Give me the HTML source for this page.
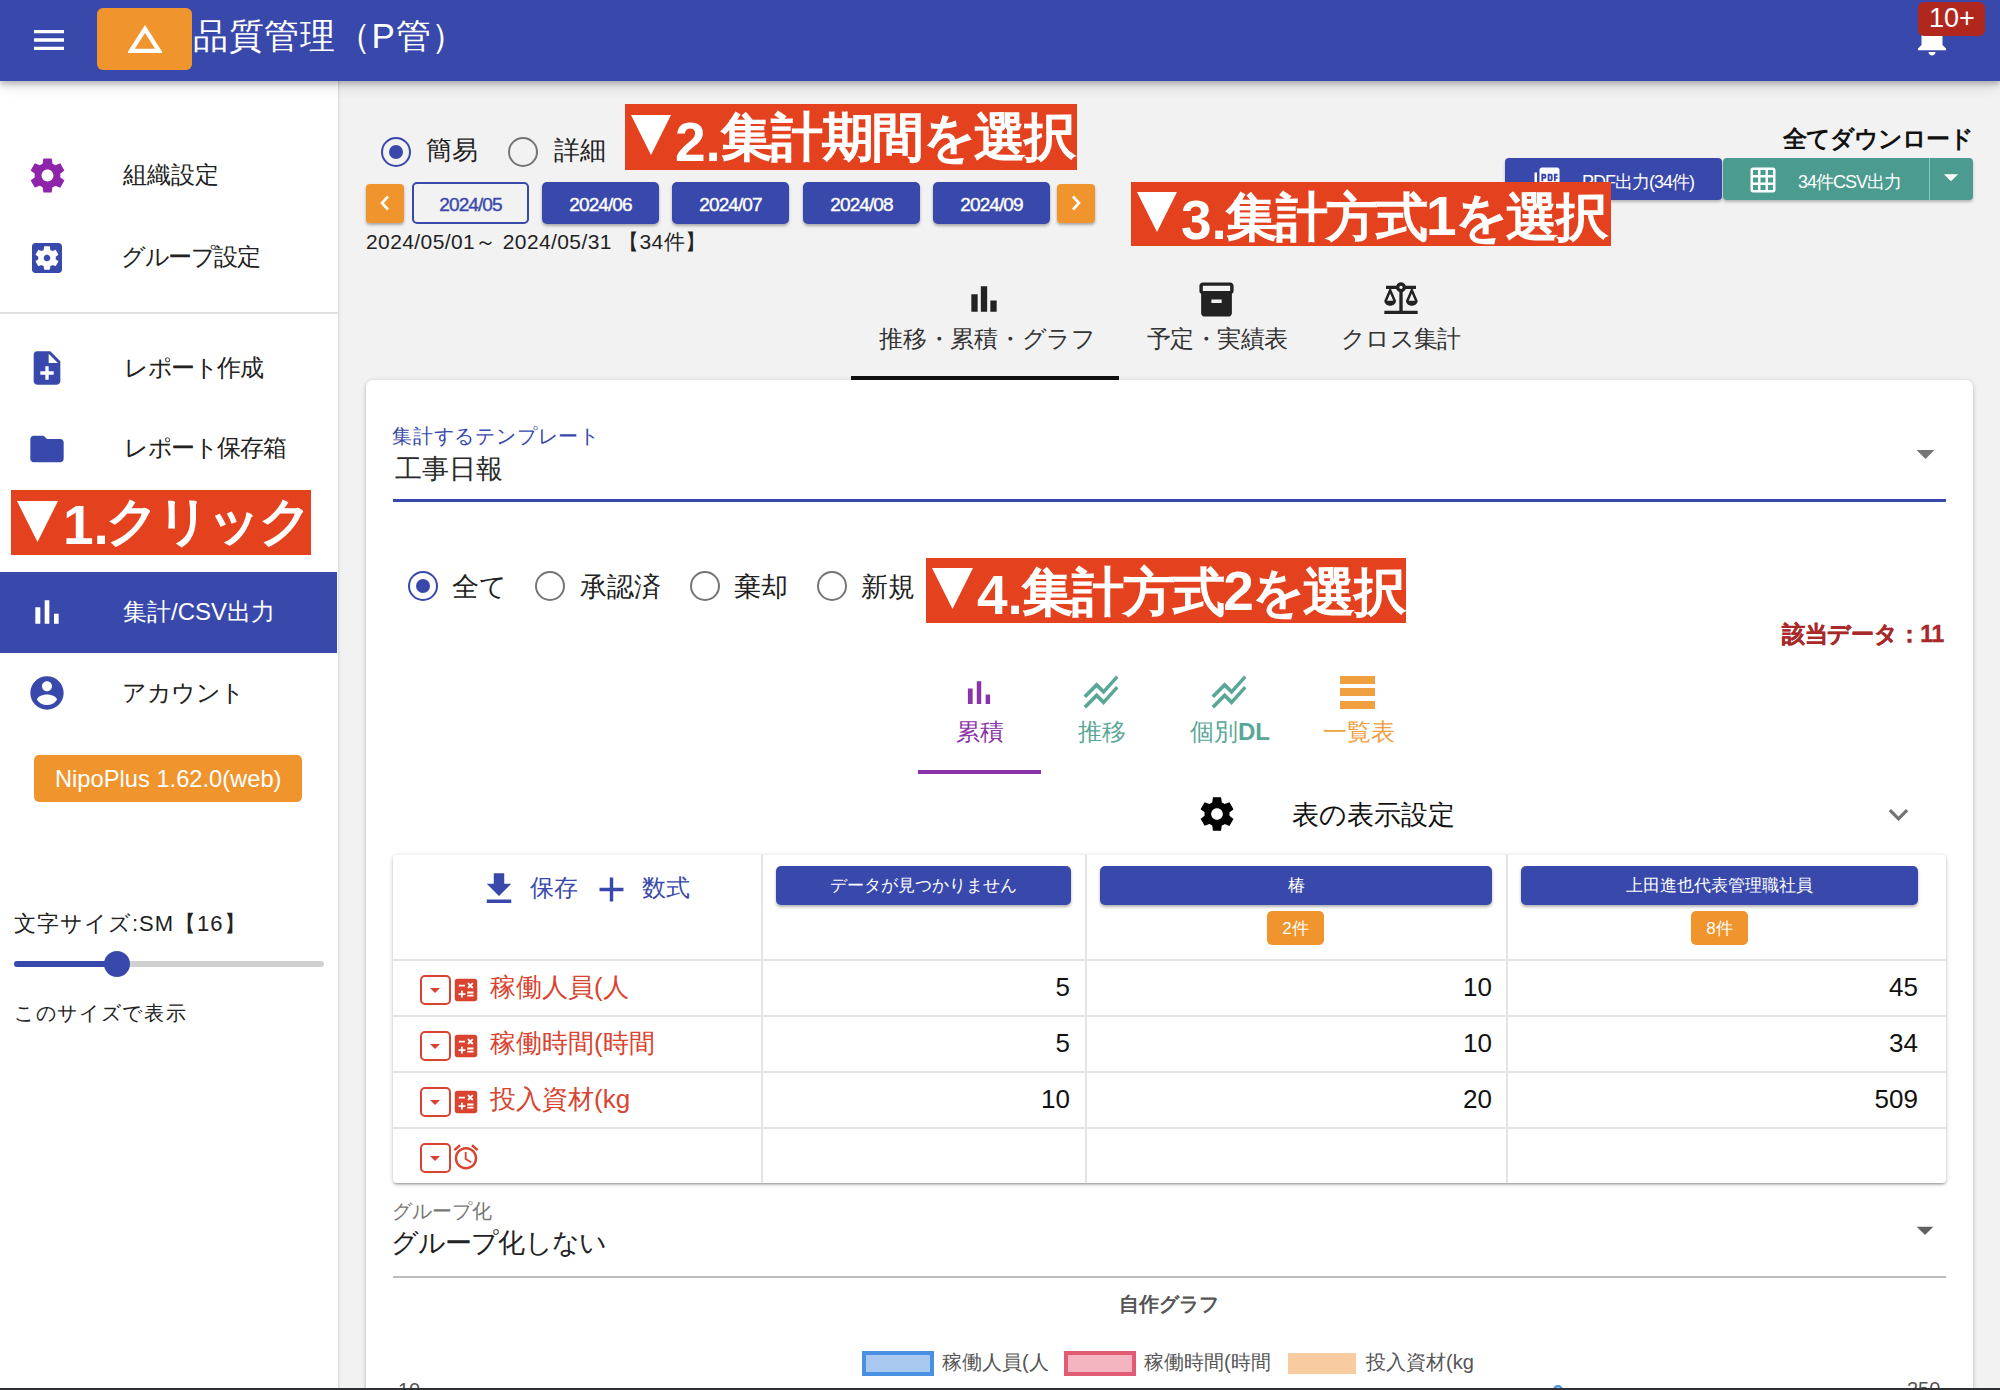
<!DOCTYPE html>
<html><head><meta charset="utf-8">
<style>
*{box-sizing:border-box;margin:0;padding:0}
html,body{width:2000px;height:1390px;overflow:hidden;background:#f2f2f2;font-family:"Liberation Sans",sans-serif;color:#222}
.a{position:absolute;white-space:nowrap;line-height:1}
svg{position:absolute;display:block}
#hdr{position:absolute;left:0;top:0;width:2000px;height:81px;background:#3949ab;box-shadow:0 3px 5px rgba(0,0,0,.2),0 6px 12px rgba(0,0,0,.12);z-index:5}
#side{position:absolute;left:0;top:81px;width:339px;height:1309px;background:#fff;border-right:1px solid #dcdcdc;box-shadow:1px 0 2px rgba(0,0,0,.05)}
.ann{position:absolute;background:#e53a1d;color:#fff;font-weight:bold;white-space:nowrap;line-height:1;z-index:8}
.annb{position:absolute;background:#e4411e;z-index:8}
.annd{position:absolute;z-index:9;color:#fff;font-weight:bold;font-size:55px;line-height:1;white-space:nowrap}
.annk{position:absolute;z-index:9;color:#fff;font-size:52px;line-height:1;white-space:nowrap;-webkit-text-stroke:2px #fff;letter-spacing:-1px}
.annk .d{font-weight:bold;font-size:55px;-webkit-text-stroke:0}
.mbtn{position:absolute;top:182px;height:42px;width:117px;background:#3949ab;color:#fff;border-radius:5px;font-size:19px;letter-spacing:-0.9px;-webkit-text-stroke:0.4px currentColor;line-height:45px;text-align:center;box-shadow:0 2px 3px rgba(0,0,0,.3)}
.radio{position:absolute;width:30px;height:30px;border-radius:50%;border:2.3px solid #757575}
.radio.on{border-color:#3949ab}
.radio.on::after{content:"";position:absolute;left:5.7px;top:5.7px;width:14px;height:14px;border-radius:50%;background:#3949ab}
#card{position:absolute;left:366px;top:380px;width:1607px;height:1100px;background:#fff;border-radius:7px;box-shadow:0 2px 2px rgba(0,0,0,.14),0 3px 1px -2px rgba(0,0,0,.12),0 1px 5px rgba(0,0,0,.2)}
</style></head><body>

<!-- HEADER -->
<div id="hdr">
  <svg style="left:29px;top:20px" width="40" height="40" viewBox="0 0 24 24"><path fill="#fff" d="M3 18h18v-2H3v2zm0-5h18v-2H3v2zm0-7v2h18V6H3z"/></svg>
  <div style="position:absolute;left:97px;top:8px;width:95px;height:62px;background:#f0952e;border-radius:6px"></div>
  <svg style="left:128px;top:25px" width="34" height="28" viewBox="0 0 34 28"><path fill="none" stroke="#fff" stroke-width="4.2" stroke-linejoin="miter" d="M17 4 L31 25.8 L3 25.8 Z"/></svg>
  <div class="a" style="left:193px;top:18px;font-size:35px;letter-spacing:0.7px;color:#fff">品質管理（P管）</div>
  <svg style="left:1911px;top:17px" width="42" height="42" viewBox="0 0 24 24"><path fill="#fff" d="M12 22c1.1 0 2-.9 2-2h-4c0 1.1.89 2 2 2zm6-6v-5c0-3.07-1.64-5.64-4.5-6.32V4c0-.83-.67-1.5-1.5-1.5s-1.5.67-1.5 1.5v.68C7.63 5.36 6 7.92 6 11v5l-2 2v1h16v-1l-2-2z"/></svg>
  <div style="position:absolute;left:1918px;top:2px;width:67px;height:34px;background:#b0271e;border-radius:6px"></div>
  <div class="a" style="left:1929px;top:5px;font-size:27px;color:#fff">10+</div>
</div>

<!-- SIDEBAR -->
<div id="side">
</div>
<svg style="left:27px;top:155px" width="41" height="41" viewBox="0 0 24 24"><path fill="#8e24aa" d="M19.44 12.99l-.01.02c.04-.33.08-.67.08-1.01 0-.34-.03-.66-.07-.99l.01.02 2.44-1.92-2.43-4.22-2.87 1.16.01.01c-.52-.4-1.09-.74-1.71-.99h.01L14.44 2H9.57l-.44 3.07h.01c-.62.25-1.19.59-1.71.99l.01-.01-2.88-1.17-2.44 4.22 2.44 1.92.01-.02c-.04.33-.07.65-.07.99 0 .34.03.68.08 1.01l-.01-.02-2.1 1.65-.33.26 2.43 4.2 2.88-1.15-.02-.04c.53.41 1.1.75 1.73 1h-.03L9.58 22h4.85s.03-.18.06-.42l.38-2.65h-.01c.62-.25 1.2-.59 1.72-.99l-.01.04 2.88 1.15 2.43-4.2s-.14-.12-.33-.26l-2.11-1.68zM12 15.5c-1.93 0-3.5-1.57-3.5-3.5s1.57-3.5 3.5-3.5 3.5 1.57 3.5 3.5-1.57 3.5-3.5 3.5z"/></svg>
<div class="a" style="left:123px;top:163px;font-size:24px">組織設定</div>
<svg style="left:27px;top:238px" width="40" height="40" viewBox="0 0 24 24"><path fill="#3949ab" d="M19 3H5c-1.11 0-2 .9-2 2v14c0 1.1.89 2 2 2h14c1.11 0 2-.9 2-2V5c0-1.1-.89-2-2-2zm-1.75 9c0 .23-.02.46-.05.68l1.48 1.16c.13.11.17.3.08.45l-1.4 2.42c-.09.15-.27.21-.43.15l-1.74-.7c-.36.28-.76.51-1.18.69l-.26 1.85c-.03.17-.18.3-.35.3h-2.8c-.17 0-.32-.13-.35-.29l-.26-1.85c-.43-.18-.82-.41-1.18-.69l-1.74.7c-.16.06-.34 0-.43-.15l-1.4-2.42c-.09-.15-.05-.34.08-.45l1.48-1.16c-.03-.23-.05-.46-.05-.69 0-.23.02-.46.05-.68l-1.48-1.16c-.13-.11-.17-.3-.08-.45l1.4-2.42c.09-.15.27-.21.43-.15l1.74.7c.36-.28.76-.51 1.18-.69l.26-1.85c.03-.17.18-.3.35-.3h2.8c.17 0 .32.13.35.29l.26 1.85c.43.18.82.41 1.18.69l1.74-.7c.16-.06.34 0 .43.15l1.4 2.42c.09.15.05.34-.08.45l-1.48 1.16c.03.23.05.46.05.69zM12 10c-1.1 0-2 .9-2 2s.9 2 2 2 2-.9 2-2-.9-2-2-2z"/></svg>
<div class="a" style="left:121px;top:245px;font-size:24px;letter-spacing:-1.5px">グループ設定</div>
<div style="position:absolute;left:0;top:312px;width:338px;height:2px;background:#e0e0e0;z-index:3"></div>
<svg style="left:27px;top:348px" width="40" height="40" viewBox="0 0 24 24"><path fill="#3949ab" d="M14 2H6c-1.1 0-1.99.9-1.99 2L4 20c0 1.1.89 2 1.99 2H18c1.1 0 2-.9 2-2V8l-6-6zm2 14h-3v3h-2v-3H8v-2h3v-3h2v3h3v2zm-3-7V3.5L18.5 9H13z"/></svg>
<div class="a" style="left:124px;top:356px;font-size:24px;letter-spacing:-1.4px">レポート作成</div>
<svg style="left:27px;top:429px" width="40" height="40" viewBox="0 0 24 24"><path fill="#3949ab" d="M10 4H4c-1.1 0-1.99.9-1.99 2L2 18c0 1.1.9 2 2 2h16c1.1 0 2-.9 2-2V8c0-1.1-.9-2-2-2h-8l-2-2z"/></svg>
<div class="a" style="left:124px;top:436px;font-size:24px;letter-spacing:-1.4px">レポート保存箱</div>
<div style="position:absolute;left:0;top:572px;width:337px;height:81px;background:#3949ab;z-index:3"></div>
<svg style="left:27px;top:592px;z-index:4" width="40" height="40" viewBox="0 0 24 24"><path fill="#fff" d="M5 9.2h3V19H5zM10.6 5h2.8v14h-2.8zm5.6 8H19v6h-2.8z"/></svg>
<div class="a" style="left:123px;top:600px;font-size:24px;color:#fff;z-index:4">集計/CSV出力</div>
<svg style="left:27px;top:673px" width="40" height="40" viewBox="0 0 24 24"><path fill="#3949ab" d="M12 2C6.48 2 2 6.48 2 12s4.48 10 10 10 10-4.48 10-10S17.52 2 12 2zm0 3c1.66 0 3 1.34 3 3s-1.34 3-3 3-3-1.34-3-3 1.34-3 3-3zm0 14.2c-2.5 0-4.71-1.28-6-3.22.03-1.99 4-3.08 6-3.08 1.99 0 5.97 1.09 6 3.08-1.29 1.94-3.5 3.22-6 3.22z"/></svg>
<div class="a" style="left:122px;top:681px;font-size:24px;letter-spacing:-0.5px">アカウント</div>
<div style="position:absolute;left:34px;top:755px;width:268px;height:47px;background:#f0952e;border-radius:5px;z-index:3"></div>
<div class="a" style="left:55px;top:768px;font-size:23.7px;color:#fff;z-index:4">NipoPlus 1.62.0(web)</div>
<div class="annb" style="left:11px;top:490px;width:300px;height:65px"></div>
<svg style="left:17px;top:501px;z-index:9" width="41" height="41" viewBox="0 0 40 40"><path fill="#fff" d="M0 0H40L20 40Z"/></svg>
<div class="annd" style="left:63px;top:498px">1.</div>
<div class="annk" style="left:106px;top:495px;letter-spacing:-2px">クリック</div>
<div class="a" style="left:14px;top:913px;font-size:22px;letter-spacing:1px;z-index:3">文字サイズ:SM【16】</div>
<div style="position:absolute;left:14px;top:961px;width:310px;height:6px;background:#d0d0d0;border-radius:3px;z-index:3"></div>
<div style="position:absolute;left:14px;top:961px;width:103px;height:6px;background:#3949ab;border-radius:3px;z-index:3"></div>
<div style="position:absolute;left:104px;top:951px;width:26px;height:26px;background:#3949ab;border-radius:50%;z-index:3"></div>
<div class="a" style="left:14px;top:1003px;font-size:20px;letter-spacing:1.7px;z-index:3">このサイズで表示</div>

<!-- MAIN TOP -->
<div class="annb" style="left:625px;top:104px;width:452px;height:66px"></div>
<svg style="left:631px;top:115px;z-index:9" width="40" height="40" viewBox="0 0 40 40"><path fill="#fff" d="M0 0H40L20 40Z"/></svg>
<div class="annd" style="left:675px;top:115px">2.</div>
<div class="annk" style="left:721px;top:111px;letter-spacing:-1.6px">集計期間を選択</div>
<div class="radio on" style="left:381px;top:137px"></div>
<div class="a" style="left:426px;top:137px;font-size:26px">簡易</div>
<div class="radio" style="left:508px;top:137px"></div>
<div class="a" style="left:554px;top:137px;font-size:26px">詳細</div>

<div style="position:absolute;left:366px;top:184px;width:38px;height:39px;background:#f0952e;border-radius:4px;box-shadow:0 2px 3px rgba(0,0,0,.3)"></div>
<svg style="left:373px;top:191px" width="24" height="24" viewBox="0 0 24 24"><path fill="none" stroke="#fff" stroke-width="2.6" d="M15 5.5L9 12l6 6.5"/></svg>
<div class="mbtn" style="left:412px;background:transparent;border:2px solid #3949ab;color:#3949ab;line-height:41px;box-shadow:none">2024/05</div>
<div class="mbtn" style="left:542px">2024/06</div>
<div class="mbtn" style="left:672px">2024/07</div>
<div class="mbtn" style="left:803px">2024/08</div>
<div class="mbtn" style="left:933px">2024/09</div>
<div style="position:absolute;left:1057px;top:184px;width:38px;height:39px;background:#f0952e;border-radius:4px;box-shadow:0 2px 3px rgba(0,0,0,.3)"></div>
<svg style="left:1064px;top:191px" width="24" height="24" viewBox="0 0 24 24"><path fill="none" stroke="#fff" stroke-width="2.6" d="M9 5.5L15 12l-6 6.5"/></svg>
<div class="a" style="left:366px;top:231px;font-size:21px;letter-spacing:0.4px">2024/05/01～ 2024/05/31 【34件】</div>

<div class="a" style="left:1783px;top:127px;font-size:24px;letter-spacing:-1px;font-weight:bold;color:#111">全てダウンロード</div>
<div style="position:absolute;left:1505px;top:158px;width:217px;height:42px;background:#3949ab;border-radius:4px;box-shadow:0 2px 3px rgba(0,0,0,.25)"></div>
<svg style="left:1532px;top:165px" width="30" height="30" viewBox="0 0 24 24"><path fill="#fff" d="M20 2H8c-1.1 0-2 .9-2 2v12c0 1.1.9 2 2 2h12c1.1 0 2-.9 2-2V4c0-1.1-.9-2-2-2zm-8.5 7.5c0 .83-.67 1.5-1.5 1.5H9v2H7.5V7H10c.83 0 1.5.67 1.5 1.5v1zm5 2c0 .83-.67 1.5-1.5 1.5h-2.5V7H15c.83 0 1.5.67 1.5 1.5v3zm4-3H19v1h1.5V11H19v2h-1.5V7h3v1.5zM9 9.5h1v-1H9v1zM4 6H2v14c0 1.1.9 2 2 2h14v-2H4V6zm10 5.5h1v-3h-1v3z"/></svg>
<div class="a" style="left:1582px;top:173px;font-size:18px;letter-spacing:-1px;color:#fff">PDF出力(34件)</div>
<div style="position:absolute;left:1723px;top:158px;width:250px;height:42px;background:#4b9c8f;border-radius:4px;box-shadow:0 2px 3px rgba(0,0,0,.25)"></div>
<div style="position:absolute;left:1929px;top:158px;width:1px;height:42px;background:#8cc9be"></div>
<svg style="left:1748px;top:165px" width="30" height="30" viewBox="0 0 24 24"><path fill="#fff" d="M20 2H4c-1.1 0-2 .9-2 2v16c0 1.1.9 2 2 2h16c1.1 0 2-.9 2-2V4c0-1.1-.9-2-2-2zM8 20H4v-4h4v4zm0-6H4v-4h4v4zm0-6H4V4h4v4zm6 12h-4v-4h4v4zm0-6h-4v-4h4v4zm0-6h-4V4h4v4zm6 12h-4v-4h4v4zm0-6h-4v-4h4v4zm0-6h-4V4h4v4z"/></svg>
<div class="a" style="left:1798px;top:173px;font-size:18px;letter-spacing:-1px;color:#fff">34件CSV出力</div>
<svg style="left:1934px;top:160px" width="34" height="34" viewBox="0 0 24 24"><path fill="#fff" d="M7 10l5 5 5-5z"/></svg>

<div class="annb" style="left:1131px;top:182px;width:480px;height:64px"></div>
<svg style="left:1137px;top:192px;z-index:9" width="40" height="40" viewBox="0 0 40 40"><path fill="#fff" d="M0 0H40L20 40Z"/></svg>
<div class="annd" style="left:1181px;top:193px">3.</div>
<div class="annk" style="left:1226px;top:189px;letter-spacing:-2px">集計方式<span class="d">1</span>を選択</div>
<!-- TABS -->
<svg style="left:965px;top:280px" width="38" height="38" viewBox="0 0 24 24"><path fill="#222" d="M4 9h4v11H4zM16 13h4v7h-4zM10 4h4v16h-4z"/></svg>
<div class="a" style="left:879px;top:327px;font-size:24px;letter-spacing:-0.25px;color:#333">推移・累積・グラフ</div>
<div style="position:absolute;left:851px;top:376px;width:268px;height:4px;background:#111"></div>
<svg style="left:1196px;top:279px" width="41" height="41" viewBox="0 0 24 24"><path fill="#222" d="M20 2H4c-1 0-2 .9-2 2v3.01c0 .72.43 1.34 1 1.69V20c0 1.1 1.1 2 2 2h14c.9 0 2-.9 2-2V8.7c.57-.35 1-.97 1-1.69V4c0-1.1-1-2-2-2zm-5 12H9v-2h6v2zm5-7H4V4l16-.02V7z"/></svg>
<div class="a" style="left:1147px;top:327px;font-size:24px;letter-spacing:-0.6px;color:#333">予定・実績表</div>
<svg style="left:1381px;top:279px" width="40" height="40" viewBox="0 0 24 24"><path fill="#222" d="M13 7.83c.85-.3 1.53-.98 1.83-1.83H18l-3 7c0 1.66 1.57 3 3.5 3s3.5-1.34 3.5-3l-3-7h2V4h-6.17c-.41-1.17-1.52-2-2.83-2s-2.42.83-2.83 2H3v2h2l-3 7c0 1.66 1.57 3 3.5 3S9 14.66 9 13L6 6h3.17c.3.85.98 1.53 1.83 1.83V19H2v2h20v-2h-9V7.83zM20.37 13h-3.74l1.87-4.36L20.37 13zm-13 0H3.63L5.5 8.64 7.37 13zM12 6c-.55 0-1-.45-1-1s.45-1 1-1 1 .45 1 1-.45 1-1 1z"/></svg>
<div class="a" style="left:1341px;top:327px;font-size:24px;letter-spacing:-0.75px;color:#333">クロス集計</div>

<!-- CARD -->
<div id="card"></div>
<div class="a" style="left:392px;top:426px;font-size:20px;letter-spacing:0.8px;color:#3949ab">集計するテンプレート</div>
<div class="a" style="left:395px;top:456px;font-size:27px;color:#2a2a2a">工事日報</div>
<div style="position:absolute;left:393px;top:499px;width:1553px;height:3px;background:#3949ab"></div>
<svg style="left:1904px;top:432px" width="43" height="43" viewBox="0 0 24 24"><path fill="#757575" d="M7 10l5 5 5-5z"/></svg>

<div class="radio on" style="left:408px;top:571px"></div>
<div class="a" style="left:452px;top:574px;font-size:27px">全て</div>
<div class="radio" style="left:535px;top:571px"></div>
<div class="a" style="left:580px;top:574px;font-size:27px">承認済</div>
<div class="radio" style="left:690px;top:571px"></div>
<div class="a" style="left:734px;top:574px;font-size:27px">棄却</div>
<div class="radio" style="left:817px;top:571px"></div>
<div class="a" style="left:861px;top:574px;font-size:27px">新規</div>
<div class="annb" style="left:926px;top:558px;width:480px;height:65px"></div>
<svg style="left:932px;top:568px;z-index:9" width="41" height="41" viewBox="0 0 40 40"><path fill="#fff" d="M0 0H40L20 40Z"/></svg>
<div class="annd" style="left:977px;top:568px">4.</div>
<div class="annk" style="left:1022px;top:564px;letter-spacing:-1.7px">集計方式<span class="d">2</span>を選択</div>
<div class="a" style="left:1782px;top:623px;font-size:23px;font-weight:bold;letter-spacing:-0.3px;-webkit-text-stroke:0.4px #a8292a;color:#a8292a">該当データ：11</div>

<svg style="left:960px;top:674px" width="38" height="38" viewBox="0 0 24 24"><path fill="#8b33a8" d="M5 9.2h3V19H5zM10.6 4.6h2.8v14.4h-2.8zm5.6 8.4H19v6h-2.8z"/></svg>
<div class="a" style="left:956px;top:720px;font-size:24px;color:#8b33a8">累積</div>
<div style="position:absolute;left:918px;top:770px;width:123px;height:4px;background:#8b33a8"></div>
<svg style="left:1080px;top:671px" width="42" height="42" viewBox="0 0 24 24"><path fill="#5aa797" d="M2 19.99l7.5-7.51 4 4 7.09-7.97L22 9.92l-8.5 9.56-4-4-6 6.01-1.5-1.5zm1.5-4.5l6-6.01 4 4L22 3.92l-1.41-1.41-7.09 7.97-4-4L2 13.99l1.5 1.5z"/></svg>
<div class="a" style="left:1078px;top:720px;font-size:24px;color:#5aa797">推移</div>
<svg style="left:1208px;top:671px" width="42" height="42" viewBox="0 0 24 24"><path fill="#5aa797" d="M2 19.99l7.5-7.51 4 4 7.09-7.97L22 9.92l-8.5 9.56-4-4-6 6.01-1.5-1.5zm1.5-4.5l6-6.01 4 4L22 3.92l-1.41-1.41-7.09 7.97-4-4L2 13.99l1.5 1.5z"/></svg>
<div class="a" style="left:1190px;top:720px;font-size:24px;color:#5aa797">個別<b>DL</b></div>
<div style="position:absolute;left:1340px;top:676px;width:35px;height:8px;background:#f0a040"></div>
<div style="position:absolute;left:1340px;top:688px;width:35px;height:8px;background:#f0a040"></div>
<div style="position:absolute;left:1340px;top:701px;width:35px;height:8px;background:#f0a040"></div>
<div class="a" style="left:1323px;top:720px;font-size:24px;color:#f0a040">一覧表</div>

<svg style="left:1197px;top:794px" width="40" height="40" viewBox="0 0 24 24"><path fill="#000" d="M19.44 12.99l-.01.02c.04-.33.08-.67.08-1.01 0-.34-.03-.66-.07-.99l.01.02 2.44-1.92-2.43-4.22-2.87 1.16.01.01c-.52-.4-1.09-.74-1.71-.99h.01L14.44 2H9.57l-.44 3.07h.01c-.62.25-1.19.59-1.71.99l.01-.01-2.88-1.17-2.44 4.22 2.44 1.92.01-.02c-.04.33-.07.65-.07.99 0 .34.03.68.08 1.01l-.01-.02-2.1 1.65-.33.26 2.43 4.2 2.88-1.15-.02-.04c.53.41 1.1.75 1.73 1h-.03L9.58 22h4.85s.03-.18.06-.42l.38-2.65h-.01c.62-.25 1.2-.59 1.72-.99l-.01.04 2.88 1.15 2.43-4.2s-.14-.12-.33-.26l-2.11-1.68zM12 15.5c-1.93 0-3.5-1.57-3.5-3.5s1.57-3.5 3.5-3.5 3.5 1.57 3.5 3.5-1.57 3.5-3.5 3.5z"/></svg>
<div class="a" style="left:1292px;top:802px;font-size:27px;color:#111">表の表示設定</div>
<svg style="left:1879px;top:795px" width="39" height="39" viewBox="0 0 24 24"><path fill="#737373" d="M16.59 8.59L12 13.17 7.41 8.59 6 10l6 6 6-6z"/></svg>

<!-- TABLE -->
<div style="position:absolute;left:393px;top:855px;width:1553px;height:328px;background:#fff;border-radius:4px;box-shadow:0 2px 2px rgba(0,0,0,.14),0 3px 1px -2px rgba(0,0,0,.12),0 1px 5px rgba(0,0,0,.2)"></div>
<div style="position:absolute;left:761px;top:855px;width:2px;height:328px;background:#e4e4e4"></div>
<div style="position:absolute;left:1085px;top:855px;width:2px;height:328px;background:#e4e4e4"></div>
<div style="position:absolute;left:1506px;top:855px;width:2px;height:328px;background:#e4e4e4"></div>
<div style="position:absolute;left:393px;top:959px;width:1553px;height:2px;background:#e4e4e4"></div>
<div style="position:absolute;left:393px;top:1015px;width:1553px;height:2px;background:#e4e4e4"></div>
<div style="position:absolute;left:393px;top:1071px;width:1553px;height:2px;background:#e4e4e4"></div>
<div style="position:absolute;left:393px;top:1127px;width:1553px;height:2px;background:#e4e4e4"></div>

<svg style="left:478px;top:868px" width="42" height="42" viewBox="0 0 24 24"><path fill="#3949ab" d="M5 20h14v-2H5v2zM19 9h-4V3H9v6H5l7 7 7-7z"/></svg>
<div class="a" style="left:530px;top:876px;font-size:24px;color:#3949ab">保存</div>
<svg style="left:591px;top:869px" width="41" height="41" viewBox="0 0 24 24"><path fill="#3949ab" d="M19 13h-6v6h-2v-6H5v-2h6V5h2v6h6v2z"/></svg>
<div class="a" style="left:642px;top:876px;font-size:24px;color:#3949ab">数式</div>

<div style="position:absolute;left:776px;top:866px;width:295px;height:39px;background:#3949ab;border-radius:5px;box-shadow:0 2px 3px rgba(0,0,0,.3)"></div>
<div class="a" style="left:776px;top:877px;width:295px;text-align:center;font-size:17px;color:#fff">データが見つかりません</div>
<div style="position:absolute;left:1100px;top:866px;width:392px;height:39px;background:#3949ab;border-radius:5px;box-shadow:0 2px 3px rgba(0,0,0,.3)"></div>
<div class="a" style="left:1100px;top:877px;width:392px;text-align:center;font-size:17px;color:#fff">椿</div>
<div style="position:absolute;left:1267px;top:911px;width:57px;height:34px;background:#f0952e;border-radius:5px"></div>
<div class="a" style="left:1267px;top:920px;width:57px;text-align:center;font-size:17px;color:#fff">2件</div>
<div style="position:absolute;left:1521px;top:866px;width:397px;height:39px;background:#3949ab;border-radius:5px;box-shadow:0 2px 3px rgba(0,0,0,.3)"></div>
<div class="a" style="left:1521px;top:877px;width:397px;text-align:center;font-size:17px;color:#fff">上田進也代表管理職社員</div>
<div style="position:absolute;left:1691px;top:911px;width:57px;height:34px;background:#f0952e;border-radius:5px"></div>
<div class="a" style="left:1691px;top:920px;width:57px;text-align:center;font-size:17px;color:#fff">8件</div>
<div style="position:absolute;left:420px;top:975px;width:31px;height:30px;border:2px solid #d9432f;border-radius:5px"></div>
<svg style="left:423px;top:978px" width="24" height="24" viewBox="0 0 24 24"><path fill="#d9432f" d="M7 10l5 5 5-5z"/></svg>
<svg style="left:451px;top:975px" width="30" height="30" viewBox="0 0 24 24"><path fill="#d9432f" d="M19 3H5c-1.1 0-2 .9-2 2v14c0 1.1.9 2 2 2h14c1.1 0 2-.9 2-2V5c0-1.1-.9-2-2-2zm-5.97 4.06L14.09 6l1.41 1.41L16.91 6l1.06 1.06-1.41 1.41 1.41 1.41-1.06 1.06-1.41-1.4-1.41 1.41-1.06-1.06 1.41-1.41-1.41-1.42zm-6.78.66h5v1.5h-5v-1.5zM11.5 16h-2v2H8v-2H6v-1.5h2v-2h1.5v2h2V16zm6.5 1.25h-5v-1.5h5v1.5zm0-2.5h-5v-1.5h5v1.5z"/></svg>
<div class="a" style="left:490px;top:974px;font-size:26px;color:#d9432f">稼働人員(人</div>
<div class="a" style="left:770px;top:974px;width:300px;text-align:right;font-size:26px;color:#111">5</div>
<div class="a" style="left:1090px;top:974px;width:402px;text-align:right;font-size:26px;color:#111">10</div>
<div class="a" style="left:1511px;top:974px;width:407px;text-align:right;font-size:26px;color:#111">45</div>
<div style="position:absolute;left:420px;top:1031px;width:31px;height:30px;border:2px solid #d9432f;border-radius:5px"></div>
<svg style="left:423px;top:1034px" width="24" height="24" viewBox="0 0 24 24"><path fill="#d9432f" d="M7 10l5 5 5-5z"/></svg>
<svg style="left:451px;top:1031px" width="30" height="30" viewBox="0 0 24 24"><path fill="#d9432f" d="M19 3H5c-1.1 0-2 .9-2 2v14c0 1.1.9 2 2 2h14c1.1 0 2-.9 2-2V5c0-1.1-.9-2-2-2zm-5.97 4.06L14.09 6l1.41 1.41L16.91 6l1.06 1.06-1.41 1.41 1.41 1.41-1.06 1.06-1.41-1.4-1.41 1.41-1.06-1.06 1.41-1.41-1.41-1.42zm-6.78.66h5v1.5h-5v-1.5zM11.5 16h-2v2H8v-2H6v-1.5h2v-2h1.5v2h2V16zm6.5 1.25h-5v-1.5h5v1.5zm0-2.5h-5v-1.5h5v1.5z"/></svg>
<div class="a" style="left:490px;top:1030px;font-size:26px;color:#d9432f">稼働時間(時間</div>
<div class="a" style="left:770px;top:1030px;width:300px;text-align:right;font-size:26px;color:#111">5</div>
<div class="a" style="left:1090px;top:1030px;width:402px;text-align:right;font-size:26px;color:#111">10</div>
<div class="a" style="left:1511px;top:1030px;width:407px;text-align:right;font-size:26px;color:#111">34</div>
<div style="position:absolute;left:420px;top:1087px;width:31px;height:30px;border:2px solid #d9432f;border-radius:5px"></div>
<svg style="left:423px;top:1090px" width="24" height="24" viewBox="0 0 24 24"><path fill="#d9432f" d="M7 10l5 5 5-5z"/></svg>
<svg style="left:451px;top:1087px" width="30" height="30" viewBox="0 0 24 24"><path fill="#d9432f" d="M19 3H5c-1.1 0-2 .9-2 2v14c0 1.1.9 2 2 2h14c1.1 0 2-.9 2-2V5c0-1.1-.9-2-2-2zm-5.97 4.06L14.09 6l1.41 1.41L16.91 6l1.06 1.06-1.41 1.41 1.41 1.41-1.06 1.06-1.41-1.4-1.41 1.41-1.06-1.06 1.41-1.41-1.41-1.42zm-6.78.66h5v1.5h-5v-1.5zM11.5 16h-2v2H8v-2H6v-1.5h2v-2h1.5v2h2V16zm6.5 1.25h-5v-1.5h5v1.5zm0-2.5h-5v-1.5h5v1.5z"/></svg>
<div class="a" style="left:490px;top:1086px;font-size:26px;color:#d9432f">投入資材(kg</div>
<div class="a" style="left:770px;top:1086px;width:300px;text-align:right;font-size:26px;color:#111">10</div>
<div class="a" style="left:1090px;top:1086px;width:402px;text-align:right;font-size:26px;color:#111">20</div>
<div class="a" style="left:1511px;top:1086px;width:407px;text-align:right;font-size:26px;color:#111">509</div>
<div style="position:absolute;left:420px;top:1143px;width:31px;height:30px;border:2px solid #d9432f;border-radius:5px"></div>
<svg style="left:423px;top:1146px" width="24" height="24" viewBox="0 0 24 24"><path fill="#d9432f" d="M7 10l5 5 5-5z"/></svg>
<svg style="left:451px;top:1142px" width="30" height="30" viewBox="0 0 24 24"><path fill="#d9432f" d="M22 5.72l-4.6-3.86-1.29 1.53 4.6 3.86L22 5.72zM7.88 3.39L6.6 1.86 2 5.71l1.29 1.53 4.59-3.85zM12.5 8H11v6l4.75 2.85.75-1.23-4-2.37V8zM12 4c-4.97 0-9 4.03-9 9s4.02 9 9 9c4.97 0 9-4.03 9-9s-4.03-9-9-9zm0 16c-3.87 0-7-3.13-7-7s3.13-7 7-7 7 3.13 7 7-3.13 7-7 7z"/></svg>

<!-- GROUP -->
<div class="a" style="left:392px;top:1201px;font-size:20px;color:#777">グループ化</div>
<div class="a" style="left:391px;top:1230px;font-size:27px;letter-spacing:-0.9px;color:#222">グループ化しない</div>
<div style="position:absolute;left:393px;top:1276px;width:1553px;height:2px;background:#bdbdbd"></div>
<svg style="left:1905px;top:1210px" width="40" height="40" viewBox="0 0 24 24"><path fill="#616161" d="M7 10l5 5 5-5z"/></svg>
<div class="a" style="left:1119px;top:1294px;font-size:20px;font-weight:bold;color:#555">自作グラフ</div>
<div style="position:absolute;left:862px;top:1351px;width:72px;height:25px;background:#a9c8f0;border:4px solid #4a90e2"></div>
<div class="a" style="left:942px;top:1352px;font-size:20px;color:#555">稼働人員(人</div>
<div style="position:absolute;left:1064px;top:1351px;width:72px;height:25px;background:#f4b5c0;border:4px solid #e25b74"></div>
<div class="a" style="left:1144px;top:1352px;font-size:20px;color:#555">稼働時間(時間</div>
<div style="position:absolute;left:1288px;top:1353px;width:68px;height:21px;background:#f8cba0"></div>
<div class="a" style="left:1366px;top:1352px;font-size:20px;color:#555">投入資材(kg</div>
<div class="a" style="left:398px;top:1380px;font-size:20px;color:#555">10</div>
<div class="a" style="left:1907px;top:1379px;font-size:20px;color:#555">250</div>
<div style="position:absolute;left:1553px;top:1385px;width:10px;height:10px;border-radius:50%;background:#a9c8f0;border:2px solid #4a90e2"></div>
<div style="position:absolute;left:0;top:1388px;width:2000px;height:2px;background:#2e3033;z-index:9"></div>
</body></html>
